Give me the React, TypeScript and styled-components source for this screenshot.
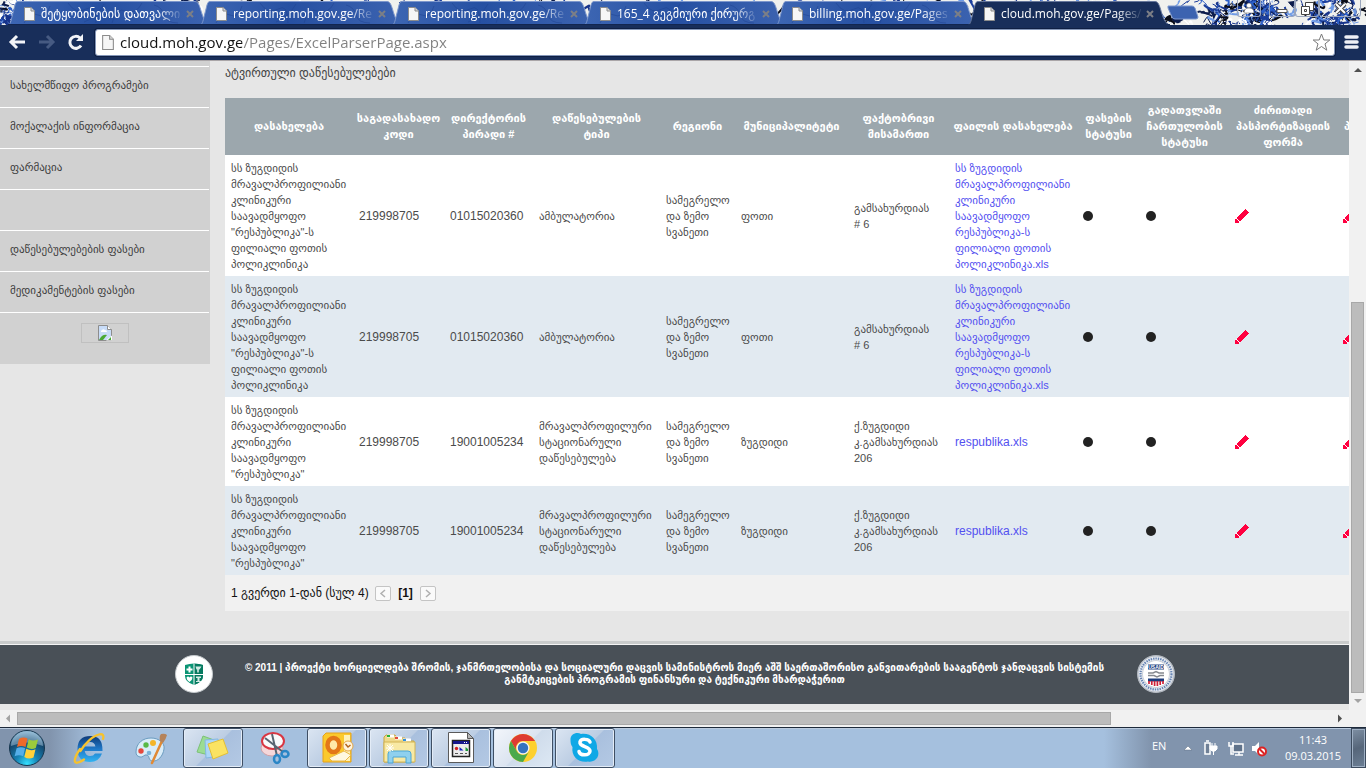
import React from "react";
import styled, { createGlobalStyle, css } from "styled-components";

const georgian = `"Liberation Sans", "DejaVu Sans", sans-serif`;
const arial = `"Liberation Sans", "DejaVu Sans", sans-serif`;
const chrome = `"Open Sans", "DejaVu Sans", sans-serif`;

const GlobalStyle = createGlobalStyle`
  * { box-sizing: border-box; }
  body { margin: 0; background: #e6e6e6; overflow: hidden; font-family: ${arial}; }
  button { border: 0; padding: 0; margin: 0; background: none; font: inherit; color: inherit; }
  a { text-decoration: none; color: inherit; }
  svg { display: block; }
`;

const Screen = styled.div`
  display: flex;
  flex-direction: column;
  height: 100vh;
  overflow: hidden;
`;

/* ---------- browser frame ---------- */

const TabStrip = styled.header`
  position: relative;
  display: flex;
  flex: none;
  height: 25px;
  padding-left: 8px;
  background: #f0f1ee;
  overflow: hidden;
`;

const ThemeArt = styled.svg`
  position: absolute;
  inset: 0;
  width: 100%;
  height: 25px;
`;

const TabRow = styled.div`
  position: relative;
  display: flex;
`;

const TabButton = styled.button<{ $active?: boolean }>`
  position: relative;
  display: flex;
  align-items: center;
  width: 192px;
  height: 25px;
  padding: 3px 0 0 16px;
  color: #fff;
  font-family: ${chrome};
  font-size: 12px;
  z-index: ${(p) => (p.$active ? 2 : 1)};
`;

const TabShape = styled.svg`
  position: absolute;
  left: 0;
  top: 0;
`;

const TabTitle = styled.span`
  position: relative;
  flex: none;
  width: 140px;
  margin-left: 6px;
  line-height: 20px;
  text-align: left;
  white-space: nowrap;
  mask-image: linear-gradient(to right, #000 115px, rgba(0, 0, 0, 0.1) 140px);
`;

const TabIcon = styled.svg`
  position: relative;
  flex: none;
`;

const NewTab = styled.button`
  position: relative;
  margin-left: 7px;
  height: 25px;
`;

const WindowButtons = styled.div`
  position: relative;
  display: flex;
  margin-left: auto;
  padding-right: 5px;
`;

const WindowButton = styled.button<{ $w: number; $apart?: boolean }>`
  width: ${(p) => p.$w}px;
  height: 17px;
  margin-right: ${(p) => (p.$apart ? 8 : 0)}px;
  border: 1px solid #9aa6bd;
  border-top: 0;
  border-radius: 0 0 3px 3px;
  display: flex;
  align-items: center;
  justify-content: center;
`;

const Toolbar = styled.nav`
  display: flex;
  flex: none;
  align-items: center;
  height: 36px;
  padding: 0 7px 1px 8px;
  background: #182e5a;
  border-bottom: 1px solid #aaa6a8;
`;

const ToolButton = styled.button`
  width: 20px;
  height: 20px;
  margin-right: 9px;
`;

const Omnibox = styled.label`
  display: flex;
  flex: 1;
  align-items: center;
  height: 27px;
  margin-right: 8px;
  padding: 0 3px 0 6px;
  background: #fff;
  border: 1px solid #8496b8;
  border-radius: 3px;
  box-shadow: 0 0 0 1px #0e1f44;
`;

const UrlInput = styled.input`
  flex: 1;
  min-width: 0;
  height: 24px;
  margin-left: 6px;
  padding: 0;
  border: 0;
  outline: 0;
  font-family: ${chrome};
  font-size: 15px;
  color: #808080;
  -webkit-text-fill-color: transparent;
  background: linear-gradient(to right, #111 122px, #808080 122px);
  -webkit-background-clip: text;
  background-clip: text;
`;

/* ---------- viewport and scroll bars ---------- */

const Viewport = styled.div`
  display: flex;
  flex: 1;
  min-height: 0;
`;

const Page = styled.div`
  display: flex;
  flex-direction: column;
  flex: 1;
  min-width: 0;
  overflow: hidden;
  background: #e6e6e6;
`;

const VScroll = styled.div`
  display: flex;
  flex-direction: column;
  align-items: center;
  width: 17px;
  background: #f1f1f1;
`;

const HScroll = styled.div`
  display: flex;
  flex: none;
  align-items: center;
  height: 17px;
  padding-right: 17px;
  background: #f1f1f1;
`;

const Arrow = styled.svg`
  flex: none;
  width: 17px;
  height: 17px;
`;

const Gap = styled.div<{ $grow: number }>`
  flex: ${(p) => p.$grow} 1 0;
`;

const VThumb = styled.div`
  flex: 391 1 0;
  width: 13px;
  background: #bcbcbc;
  border: 1px solid #a8a8a8;
`;

const HThumb = styled.div`
  flex: 1094 1 0;
  height: 13px;
  background: #bcbcbc;
  border: 1px solid #a8a8a8;
`;

/* ---------- page content ---------- */

const Body = styled.div`
  display: flex;
  flex: none;
  align-items: flex-start;
`;

const Sidebar = styled.aside`
  flex: none;
  width: 210px;
  padding: 5px 1px 0 0;
  background: #d1d1d1;
`;

const SideLink = styled.a`
  display: block;
  height: 41px;
  padding-left: 10px;
  border-top: 1px solid #fff;
  font-family: ${georgian};
  font-size: 11px;
  line-height: 36px;
  color: #3c3c3c;
`;

const SideEnd = styled.div`
  display: flex;
  justify-content: center;
  height: 52px;
  padding-top: 10px;
  border-top: 1px solid #fff;
`;

const Missing = styled.div`
  display: flex;
  align-items: center;
  justify-content: center;
  width: 48px;
  height: 20px;
  border: 1px solid #c0c0c0;
`;

const Main = styled.main`
  flex: 1;
  min-width: 0;
  padding: 4px 0 30px 15px;
`;

const Heading = styled.h1`
  margin: 0 0 17px;
  font-family: ${georgian};
  font-size: 12px;
  font-weight: 400;
  line-height: 16px;
  color: #444;
`;

const Grid = styled.table`
  width: 1220px;
  table-layout: fixed;
  border-collapse: collapse;
`;

const Col = styled.col<{ $w: number }>`
  width: ${(p) => p.$w}px;
`;

const Th = styled.th`
  height: 57px;
  padding: 4px 2px 5px;
  background: #9ca7ad;
  color: #fff;
  font-family: ${georgian};
  font-size: 11px;
  font-weight: 700;
  line-height: 16px;
  white-space: pre-line;
`;

const Row = styled.tr`
  background: #fff;
  &:nth-child(even) { background: #e2eaf1; }
`;

const Td = styled.td<{ $kind?: "number" | "link" }>`
  padding: 5px 0 4px 6px;
  font-family: ${georgian};
  font-size: 11px;
  line-height: 16px;
  color: #4b4b4b;
  vertical-align: middle;
  white-space: pre-line;
  ${(p) => p.$kind === "number" && css`font-family: ${arial}; font-size: 12px;`}
  ${(p) => p.$kind === "link" && css`color: #5350f0;`}
`;

const LatinLink = styled.a`
  font-family: ${arial};
  font-size: 12px;
`;

const Dot = styled.div`
  width: 10px;
  height: 10px;
  border-radius: 50%;
  background: #222;
`;

const Pager = styled.div`
  display: flex;
  align-items: center;
  width: 1220px;
  height: 36px;
  padding-left: 6px;
  background: #f1f1f1;
  font-family: ${arial};
  font-size: 12px;
  color: #111;
`;

const PagerText = styled.span`
  width: 144px;
  font-family: ${georgian};
  white-space: nowrap;
`;

const PageButton = styled.button`
  display: flex;
  align-items: center;
  justify-content: center;
  width: 16px;
  height: 15px;
  border: 1px solid #c4c4c4;
  border-radius: 2px;
  background: #fafafa;
`;

const PageNumber = styled.b`
  width: 29px;
  text-align: center;
`;

const Footer = styled.footer`
  flex: none;
  display: flex;
  justify-content: center;
  height: 63px;
  border-top: 3px solid #c9cbcb;
  box-shadow: inset 0 1px 0 #f4f4f4;
  background: #495057;
`;

const FooterInner = styled.div`
  display: flex;
  align-items: center;
  justify-content: space-between;
  width: 1000px;
`;

const FooterText = styled.p`
  margin: 0;
  text-align: center;
  white-space: nowrap;
  font-family: ${georgian};
  font-size: 10px;
  font-weight: 700;
  line-height: 12px;
  color: #fff;
`;

/* ---------- task bar ---------- */

const Taskbar = styled.div`
  display: flex;
  flex: none;
  height: 41px;
  border-top: 1px solid #1d2a3b;
  box-shadow: inset 0 1px 0 #b9cade;
  background: linear-gradient(to right, #8194ad 0, #8194ad 50px, #a5c0de 95px, #a5c0de calc(100% - 262px), #8194ad calc(100% - 215px), #8194ad 100%);
`;

const StartButton = styled.button`
  display: flex;
  align-items: center;
  width: 59px;
  padding-left: 8px;
`;

const TaskButton = styled.button<{ $open?: boolean; $front?: boolean }>`
  display: flex;
  align-items: center;
  justify-content: center;
  width: 60px;
  height: 40px;
  margin-right: 2px;
  border: 1px solid transparent;
  ${(p) =>
    p.$open &&
    css`
      border-color: #3f4f64;
      border-radius: 3px;
      box-shadow: inset 0 0 0 1px #e3ecf7;
      background: linear-gradient(135deg, #dbe5f2, #bccde3 50%, #a9c0de 52%, #b4c9e4);
    `}
  ${(p) => p.$front && css`background: linear-gradient(135deg, #f3f6fb, #dbe4f0 50%, #cfdceb 52%, #dde8f4);`}
`;

const Tray = styled.div`
  display: flex;
  align-items: center;
  margin-left: auto;
  color: #fff;
  font-family: ${chrome};
  font-size: 11px;
`;

const Lang = styled.button`
  width: 31px;
  height: 24px;
  padding-bottom: 6px;
  text-align: left;
  align-self: center;
`;

const TrayIcon = styled.button<{ $w: number }>`
  width: ${(p) => p.$w}px;
`;

const Clock = styled.time`
  width: 76px;
  text-align: center;
  line-height: 16px;
`;

const ShowDesktop = styled.button`
  width: 15px;
  height: 40px;
  border: 1px solid #3c4b5e;
  box-shadow: inset 0 0 0 1px #9fb0c4;
  background: linear-gradient(160deg, #7e8fa3, #56667a 50%, #6c7f95);
`;

/* ---------- data ---------- */

const tabs = [
  "შეტყობინების დათვალი",
  "reporting.moh.gov.ge/Re",
  "reporting.moh.gov.ge/Re",
  "165_4 გეგმიური ქირურგ",
  "billing.moh.gov.ge/Pages",
  "cloud.moh.gov.ge/Pages/",
];

const sideLinks = [
  "სახელმწიფო პროგრამები",
  "მოქალაქის ინფორმაცია",
  "ფარმაცია",
  "",
  "დაწესებულებების ფასები",
  "მედიკამენტების ფასები",
];

const columns: [string, number][] = [
  ["დასახელება", 128],
  ["საგადასახადო\nკოდი", 91],
  ["დირექტორის\nპირადი #", 89],
  ["დაწესებულების\nტიპი", 127],
  ["რეგიონი", 75],
  ["მუნიციპალიტეტი", 113],
  ["ფაქტობრივი\nმისამართი", 101],
  ["ფაილის დასახელება", 128],
  ["ფასების\nსტატუსი", 63],
  ["გადათვლაში\nჩართულობის\nსტატუსი", 89],
  ["ძირითადი\nპასპორტიზაციის\nფორმა", 108],
  ["დამატებითი\nპასპორტიზაციის\nფორმა", 108],
];

const branch = {
  name: 'სს ზუგდიდის მრავალპროფილიანი კლინიკური საავადმყოფო "რესპუბლიკა"-ს ფილიალი ფოთის პოლიკლინიკა',
  director: "01015020360",
  type: "ამბულატორია",
  town: "ფოთი",
  address: "გამსახურდიას\n# 6",
  file: "სს ზუგდიდის მრავალპროფილიანი კლინიკური საავადმყოფო რესპუბლიკა-ს ფილიალი ფოთის პოლიკლინიკა.xls",
  latin: false,
};

const hospital = {
  name: 'სს ზუგდიდის მრავალპროფილიანი კლინიკური საავადმყოფო "რესპუბლიკა"',
  director: "19001005234",
  type: "მრავალპროფილური სტაციონარული დაწესებულება",
  town: "ზუგდიდი",
  address: "ქ.ზუგდიდი კ.გამსახურდიას 206",
  file: "respublika.xls",
  latin: true,
};

const rows = [branch, branch, hospital, hospital];

/* ---------- drawings ---------- */

function artwork() {
  let seed = 11;
  const r = () => {
    seed = (seed * 16807) % 2147483647;
    return seed / 2147483647;
  };
  const colours = ["#1c3f9c", "#0c1c4c", "#2c5fc8", "#6f9be6", "#0a0d18", "#ffffff", "#16338a"];
  const stroke = (key: string, x: number, y: number, solidity: number) => {
    const n = (size: number) => (r() * size - size / 2).toFixed(1);
    const d = `M${x.toFixed(1)} ${y.toFixed(1)}q${n(12)} ${n(10)} ${n(16)} ${n(16)}q${n(8)} ${n(8)} ${n(12)} ${n(10)}`;
    const c = colours[Math.floor(r() * colours.length)];
    return <path key={key} d={d} stroke={c} strokeWidth={r() > 0.6 ? 2 : 1} fill={r() < solidity ? c : "none"} />;
  };
  const wide = Array.from({ length: 380 }, (_, i) => stroke(`w${i}`, r() * 1366, r() * 27 - 1, 0.25));
  // Dense flower clusters: centre and half width of each.
  const clusters = [[10, 14], [1240, 34], [1262, 16], [1334, 22]];
  const dense = clusters.flatMap(([cx, half], k) =>
    Array.from({ length: half * 3 }, (_, i) => stroke(`c${k}-${i}`, cx + (r() * 2 - 1) * half, r() * 27 - 1, 0.3))
  );
  return [...wide, ...dense];
}

const art = artwork();

const FileIcon = ({ w = 11, h = 14 }: { w?: number; h?: number }) => (
  <TabIcon width={w} height={h} viewBox="0 0 11 14" aria-hidden="true">
    <path d="M.5.5h6.5l3.500 3.500v9.500h-10z" fill="#f6f6f6" stroke="#8c8c8c" />
    <path d="M7 .5v3.500h3.500" fill="#d8d8d8" stroke="#8c8c8c" />
  </TabIcon>
);

const Tab = ({ title, active }: { title: string; active?: boolean }) => (
  <TabButton $active={active} role="tab" aria-selected={!!active}>
    <TabShape width="203" height="25" aria-hidden="true">
      <defs>
        <linearGradient id="tabFill" x1="0" x2="1" y1="0" y2="0">
          <stop offset="0" stopColor="#3d66b3" />
          <stop offset=".45" stopColor="#2650a2" />
          <stop offset="1" stopColor="#3c63b0" />
        </linearGradient>
      </defs>
      <path
        d="M0 25C3 24 3 20 5 13S7 1.500 10 1.500H187C191 1.500 192 8 194 14S198 24 202 25Z"
        fill={active ? "#182e5a" : "url(#tabFill)"}
        stroke={active ? "#66779b" : "#7d97cc"}
      />
      {!active && (
        <g stroke="#1d4190" fill="none" opacity=".5">
          <path d="M16 23q6-12 14-8t12-9M60 3q8 12 18 6t10 14M104 23q4-16 14-12t16-8M146 5q8 2 10 10t14 8M76 22q12-4 20-18" />
        </g>
      )}
      <path d="M0 24.500h202" stroke={active ? "#182e5a" : "#122650"} />
    </TabShape>
    <FileIcon />
    <TabTitle>{title}</TabTitle>
    <TabIcon width="20" height="9" viewBox="0 0 20 9" aria-hidden="true">
      <path d="M6 1l6 6M12 1l-6 6" stroke="#7c7f86" strokeWidth="2" />
    </TabIcon>
  </TabButton>
);

const Pencil = () => (
  <svg width="14" height="14" viewBox="0 0 14 14" shapeRendering="crispEdges" aria-hidden="true">
    <path d="M10.500 0L14 3.500 5 12 4 13.500H0V10L2 8z" fill="#ff0040" />
    <path d="M1 9h1v1H1zM2 10h1v1H2zM3 11h1v1H3zM4 12h1v1H4z" fill="#fff" />
  </svg>
);

const StarIcon = () => (
  <svg width="19" height="19" viewBox="0 0 19 19" aria-hidden="true">
    <path d="M9.500 1l2.300 6h6l-4.800 3.900 1.800 6.300-5.300-3.700-5.300 3.700L6 10.900 1.200 7h6z" fill="#fff" stroke="#7a7a7a" strokeLinejoin="round" />
  </svg>
);

const MinistryLogo = () => (
  <svg width="38" height="38" viewBox="0 0 38 38" role="img" aria-label="Ministry">
    <circle cx="19" cy="19" r="18.500" fill="#fff" stroke="#c4c9cc" />
    <path d="M10 10q9-3 18 0v11q0 6-9 9-9-3-9-9z" fill="#0a9474" />
    <path d="M19 8.700q5 0 9 1.300v11q0 6-9 9z" fill="#067a60" />
    <path d="M19 8.500v22M9.500 19.500h19" stroke="#fff" />
    <path d="M14.500 11.500v6M11.500 14.500h6" stroke="#fff" strokeWidth="2" />
    <path d="M11.500 22.500q1.500-2 3 0 1.500-2 3 0 0 2.500-3 4.500-3-2-3-4.500z" fill="#fff" />
    <path d="M20.500 11.500h6l-2 3h-.7v3h-1.600v-3h-.7zM21 21.500h5v1.500h-1.500v3h1.500v1h-5v-1h1.500v-3H21z" fill="#d5ece6" />
  </svg>
);

const UsaidLogo = () => (
  <svg width="38" height="38" viewBox="0 0 38 38" role="img" aria-label="USAID">
    <circle cx="19" cy="19" r="18.500" fill="#c3c9d2" stroke="#b4bac2" />
    <circle cx="19" cy="19" r="15.500" fill="none" stroke="#e9ecf1" strokeWidth="3.500" />
    <circle cx="19" cy="19" r="15.500" fill="none" stroke="#6583b3" strokeWidth="2.200" strokeDasharray="1.400 1" />
    <circle cx="19" cy="19" r="13" fill="#fff" />
    <path d="M11 9.500h16v5H11z" fill="#1d3c7c" />
    <text x="19" y="14" textAnchor="middle" fontFamily="Liberation Sans" fontWeight="700" fontSize="5" fill="#fff">USAID</text>
    <path d="M11 18h5l3-1.500 3 1.500h5M11 20.500h6l3 1.500 3-1.500h4" stroke="#85898f" strokeWidth="1.500" fill="none" />
    <path d="M11 23.500h16v3H11z" fill="#1d3c7c" />
    <path d="M12 26v3M14.800 26v4M17.600 26v5M20.400 26v5M23.200 26v4M26 26v3" stroke="#cf2239" strokeWidth="1.700" />
  </svg>
);

const StartOrb = () => (
  <svg width="38" height="38" viewBox="0 0 38 38" aria-hidden="true">
    <defs>
      <radialGradient id="orb" cx=".5" cy=".95" r=".9">
        <stop offset="0" stopColor="#35e0ff" />
        <stop offset=".35" stopColor="#1583b5" />
        <stop offset=".75" stopColor="#14466c" />
        <stop offset="1" stopColor="#6f9fc0" />
      </radialGradient>
    </defs>
    <circle cx="19" cy="19" r="17.500" fill="url(#orb)" stroke="#16364e" />
    <path d="M3 17a16 15 0 0 1 32 0q-16-7-32 0z" fill="#bcd9ea" opacity=".45" />
    <path d="M11 10q4-2.500 8.500-.5l-2 8.500q-4-2-8.500 0z" fill="#ee6a2a" />
    <path d="M20.700 10.200q4 2.500 9.300.3l-2.200 8.500q-4.500 2-9-.5z" fill="#9ccb3c" />
    <path d="M8.600 19.300q4.400-2 8.500 0l-2 8q-4-2-8.500 0z" fill="#55aee8" />
    <path d="M18.300 19.800q4.500 2.500 9.200.5l-2 8.300q-5 2-9.200-.7z" fill="#ffd13a" />
  </svg>
);

const IeIcon = () => (
  <svg width="34" height="34" viewBox="0 0 34 34" aria-hidden="true">
    <defs>
      <linearGradient id="ie" x1="0" x2="0" y1="0" y2="1">
        <stop offset="0" stopColor="#0e3a78" /><stop offset=".5" stopColor="#1f78c8" /><stop offset="1" stopColor="#31b4f2" />
      </linearGradient>
    </defs>
    <path d="M30.500 20H12.700q.8 5 5.500 5 3.300 0 4.800-2.500h7q-3 8.500-12 8.500-12.500 0-12.500-13T18.500 5Q31 5 30.500 20zM12.800 15.500h10.600q-.7-4.500-5.200-4.500-4.600 0-5.400 4.500z" fill="url(#ie)" />
    <path d="M8.500 20C13 12 21 5 27 3.500c4-1 5 1 4 4.500M8 18C2 27 1 33 6 31.500c2-.5 4-1.500 6-3" fill="none" stroke="#f6c22e" strokeWidth="2.300" strokeLinecap="round" />
  </svg>
);

const PaintIcon = () => (
  <svg width="34" height="34" viewBox="0 0 34 34" aria-hidden="true">
    <path d="M2 21C2 12 9 7 17 7s14 5 13 11c-1 7-6 13-12 12-4-1-2-5-5-6s-4 3-7 2-4-2-4-5z" fill="#d9ecf8" stroke="#6b9cc0" />
    <circle cx="7" cy="20" r="2.700" fill="#e6483c" /><circle cx="12" cy="14" r="2.700" fill="#58b947" />
    <circle cx="19" cy="12" r="3" fill="#f4b528" /><circle cx="15" cy="22" r="2.300" fill="#7cb3d8" />
    <path d="M18 32L28 10" stroke="#e08a35" strokeWidth="2.500" strokeLinecap="round" />
    <path d="M26 10q-1-5 1-7 4-1 6 1-1 4-4 8z" fill="#b5835a" />
  </svg>
);

const NotesIcon = () => (
  <svg width="34" height="34" viewBox="0 0 34 34" aria-hidden="true">
    <path d="M7 5l11 4-5 15-12-3z" fill="#9bdc93" stroke="#7cc276" />
    <path d="M9 9l13-1 2 17-14 2z" fill="#acd6f7" stroke="#84b8e2" />
    <path d="M12 13l15-5 5 14-15 6z" fill="#fbe362" stroke="#e3bf36" />
  </svg>
);

const SnipIcon = () => (
  <svg width="34" height="34" viewBox="0 0 34 34" aria-hidden="true">
    <ellipse cx="14" cy="17" rx="11" ry="8" fill="#f5d7da" stroke="#cf9fa6" />
    <ellipse cx="15" cy="10" rx="11" ry="8" fill="#f9fafc" stroke="#d93642" strokeWidth="2" />
    <path d="M7 7l18 14M14 3l5 22" stroke="#596572" strokeWidth="2" />
    <ellipse cx="27" cy="23" rx="3.500" ry="3" fill="none" stroke="#2a86c6" strokeWidth="2.500" />
    <ellipse cx="19" cy="28" rx="3" ry="4" fill="none" stroke="#2a86c6" strokeWidth="2.500" />
  </svg>
);

const OutlookIcon = () => (
  <svg width="34" height="34" viewBox="0 0 34 34" aria-hidden="true">
    <path d="M6 2h25v29H3V5z" fill="#fbc92c" stroke="#e6a21a" />
    <path d="M24 4h6v26h-6z" fill="#fff1b5" />
    <ellipse cx="13.500" cy="14" rx="6" ry="7" fill="#ffe9a8" stroke="#e37718" strokeWidth="4.500" />
    <path d="M9 27l15-7 7 4-6 6H12z" fill="#fff8e0" stroke="#e9b84a" />
    <circle cx="28" cy="15" r="5" fill="#fff5dd" stroke="#e3a64a" />
    <path d="M25.500 13l2.500 3 2.500-2" fill="none" stroke="#b4651c" strokeWidth="1.500" />
  </svg>
);

const ExplorerIcon = () => (
  <svg width="34" height="34" viewBox="0 0 34 34" aria-hidden="true">
    <path d="M2 6l2-2h9l2 3h8l2 3h7v21H2z" fill="#efd98a" stroke="#c6a544" />
    <path d="M5 5h7M13 7h7M21 9h8" stroke="#fff" strokeWidth="3" />
    <path d="M5 5h3" stroke="#26b33a" strokeWidth="2" /><path d="M13 7h3" stroke="#e04b3c" strokeWidth="2" /><path d="M21 9h3" stroke="#2f8fe0" strokeWidth="2" />
    <path d="M2 11h31v20H2z" fill="#f8e9a4" stroke="#d2b455" />
    <path d="M6 32V23q0-3 3-3h17q3 0 3 3v9h-5v-6H11v6z" fill="#8fd0ee" stroke="#4ca6d4" />
    <path d="M8 13v8M4 17h8M5 14l6 6M11 14l-6 6" stroke="#fff" />
  </svg>
);

const ProgramIcon = () => (
  <svg width="34" height="34" viewBox="0 0 34 34" aria-hidden="true">
    <path d="M4.500 1.500h19l6 6v24h-25z" fill="#fff" stroke="#5a5a5a" />
    <path d="M23.500 1.500v6h6z" fill="#b6b6b6" stroke="#5a5a5a" />
    <path d="M8.500 9.500h17v16h-17z" fill="#ececec" stroke="#222" strokeWidth="1.500" />
    <path d="M9 10h16v3H9z" fill="#16168c" />
    <path d="M20 11.500h1M22 11.500h1" stroke="#fff" />
    <circle cx="12.500" cy="17.500" r="1.700" fill="#d42020" /><path d="M15.500 16l4 3.500h-4z" fill="#1722c4" /><path d="M21.500 16v4h2.500v-2z" fill="#1d9a39" />
    <path d="M11 22.500h3M16 22.500h3M21 22.500h2" stroke="#555" />
  </svg>
);

const ChromeIcon = () => (
  <svg width="34" height="34" viewBox="0 0 34 34" aria-hidden="true">
    <circle cx="17" cy="17" r="14" fill="#fdd02f" />
    <path d="M4.900 10A14 14 0 0 1 29.100 10H17a7 7 0 0 0-6.100 10.500z" fill="#de3b32" />
    <path d="M4.900 10A14 14 0 0 0 17 31l6-10.500a7 7 0 0 1-12.100 0z" fill="#4aa94c" />
    <circle cx="17" cy="17" r="6.500" fill="#f4f4f4" /><circle cx="17" cy="17" r="5.200" fill="#3573c0" />
  </svg>
);

const SkypeIcon = () => (
  <svg width="34" height="34" viewBox="0 0 34 34" aria-hidden="true">
    <path d="M2.500 9C2 3 9 .5 13 3c9-1.500 17 5 16 15 4 6-1 14-9 12.500C11 32 3 26 4.500 16 3 14 2.500 12 2.500 9z" fill="#0fa8e6" />
    <path d="M22 11c-1-3-9-4-10 0-1 5 10 4 10 9 0 5-10 5-11 .5" fill="none" stroke="#fff" strokeWidth="3.500" strokeLinecap="round" />
  </svg>
);

const tasks: { name: string; icon: React.ReactNode; open?: boolean; front?: boolean }[] = [
  { name: "Internet Explorer", icon: <IeIcon /> },
  { name: "Paint", icon: <PaintIcon /> },
  { name: "Sticky Notes", icon: <NotesIcon />, open: true },
  { name: "Snipping Tool", icon: <SnipIcon /> },
  { name: "Outlook", icon: <OutlookIcon />, open: true },
  { name: "Explorer", icon: <ExplorerIcon />, open: true },
  { name: "Program", icon: <ProgramIcon />, open: true },
  { name: "Chrome", icon: <ChromeIcon />, open: true, front: true },
  { name: "Skype", icon: <SkypeIcon />, open: true },
];

export default function App() {
  return (
    <Screen>
      <GlobalStyle />
      <TabStrip>
        <ThemeArt aria-hidden="true">{art}</ThemeArt>
        <TabRow role="tablist">
          {tabs.map((t, i) => (
            <Tab key={i} title={t} active={i === 5} />
          ))}
        </TabRow>
        <NewTab aria-label="New tab">
          <svg width="32" height="15" viewBox="0 0 32 15">
            <path d="M1 1h24q2 0 3 2l3 9q0 2-2 2H8q-2 0-3-2L1 3z" fill="#3c63b0" stroke="#7d97cc" />
          </svg>
        </NewTab>
        <WindowButtons>
          <WindowButton $w={24} $apart aria-label="User">
            <svg width="12" height="12"><circle cx="6" cy="3.500" r="2.500" fill="#fff" stroke="#555" strokeWidth=".5" /><path d="M1 11q0-5 5-5t5 5z" fill="#fff" stroke="#555" strokeWidth=".5" /></svg>
          </WindowButton>
          <WindowButton $w={26} aria-label="Minimize">
            <svg width="12" height="12"><path d="M1 7.500h10v3H1z" fill="#fff" stroke="#555" /></svg>
          </WindowButton>
          <WindowButton $w={24} aria-label="Restore">
            <svg width="13" height="13"><path d="M4.500.5h8v8h-8z" fill="#fff" stroke="#444" /><path d="M.5 4.500h8v8h-8z" fill="#fff" stroke="#444" /><path d="M3.500 7.500h2v2h-2z" fill="none" stroke="#444" /></svg>
          </WindowButton>
          <WindowButton $w={42} aria-label="Close">
            <svg width="13" height="13"><path d="M2 2l9 9M11 2l-9 9" stroke="#444" strokeWidth="4" /><path d="M2 2l9 9M11 2l-9 9" stroke="#fff" strokeWidth="2" /></svg>
          </WindowButton>
        </WindowButtons>
      </TabStrip>

      <Toolbar>
        <ToolButton aria-label="Back">
          <svg width="20" height="20"><path d="M17 10H4M9 4l-6 6 6 6" fill="none" stroke="#f2f4f8" strokeWidth="3" /></svg>
        </ToolButton>
        <ToolButton aria-label="Forward">
          <svg width="20" height="20"><path d="M2 10h13M10 4l6 6-6 6" fill="none" stroke="#465a82" strokeWidth="3" /></svg>
        </ToolButton>
        <ToolButton aria-label="Reload">
          <svg width="20" height="20"><path d="M15 13.500A6 6 0 1 1 14 6" fill="none" stroke="#f2f4f8" strokeWidth="3" /><path d="M17 2v7h-7z" fill="#f2f4f8" /></svg>
        </ToolButton>
        <Omnibox>
          <FileIcon w={12} h={15} />
          <UrlInput aria-label="Address" defaultValue="cloud.moh.gov.ge/Pages/ExcelParserPage.aspx" />
          <StarIcon />
        </Omnibox>
        <button aria-label="Menu">
          <svg width="16" height="16"><path d="M3 3h11M3 8h11M3 13h11" stroke="#eef1f6" strokeWidth="3.500" strokeLinecap="round" /></svg>
        </button>
      </Toolbar>

      <Viewport>
        <Page>
          <Body>
            <Sidebar>
              {sideLinks.map((t, i) => (
                <SideLink key={i} href="#">{t}</SideLink>
              ))}
              <SideEnd>
                <Missing>
                  <svg width="14" height="16" role="img" aria-label="Missing picture">
                    <path d="M.5.5h9l4 4v11H.5z" fill="#c8dcf8" stroke="#8d8d8d" />
                    <path d="M9.500.5v4h4" fill="#fff" stroke="#8d8d8d" />
                    <path d="M3 6q2-3 4-1 2 0 2 2H3z" fill="#fff" />
                    <path d="M1 15q3-6 8-5l-4 5z" fill="#4aa934" /><path d="M8 15.500l6-5v5z" fill="#fff" /><path d="M10 15l3-3v3z" fill="#4aa934" />
                  </svg>
                </Missing>
              </SideEnd>
            </Sidebar>
            <Main>
              <Heading>ატვირთული დაწესებულებები</Heading>
              <Grid>
                <colgroup>
                  {columns.map(([name, w]) => <Col key={name} $w={w} />)}
                </colgroup>
                <thead>
                  <tr>{columns.map(([name]) => <Th key={name} scope="col">{name}</Th>)}</tr>
                </thead>
                <tbody>
                  {rows.map((r, i) => (
                    <Row key={i}>
                      <Td>{r.name}</Td>
                      <Td $kind="number">219998705</Td>
                      <Td $kind="number">{r.director}</Td>
                      <Td>{r.type}</Td>
                      <Td>სამეგრელო და ზემო სვანეთი</Td>
                      <Td>{r.town}</Td>
                      <Td>{r.address}</Td>
                      <Td $kind="link">{r.latin ? <LatinLink href="#">{r.file}</LatinLink> : <a href="#">{r.file}</a>}</Td>
                      <Td><Dot /></Td>
                      <Td><Dot /></Td>
                      <Td><a href="#" aria-label="Edit main form"><Pencil /></a></Td>
                      <Td><a href="#" aria-label="Edit additional form"><Pencil /></a></Td>
                    </Row>
                  ))}
                </tbody>
              </Grid>
              <Pager>
                <PagerText>1 გვერდი 1-დან (სულ 4)</PagerText>
                <PageButton aria-label="Previous page">
                  <svg width="8" height="9"><path d="M6 1L2 4.500 6 8" fill="none" stroke="#b0b0b0" strokeWidth="1.500" /></svg>
                </PageButton>
                <PageNumber>[1]</PageNumber>
                <PageButton aria-label="Next page">
                  <svg width="8" height="9"><path d="M2 1l4 3.500L2 8" fill="none" stroke="#b0b0b0" strokeWidth="1.500" /></svg>
                </PageButton>
              </Pager>
            </Main>
          </Body>
          <Footer>
            <FooterInner>
              <MinistryLogo />
              <FooterText>
                © 2011 | პროექტი ხორციელდება შრომის, ჯანმრთელობისა და სოციალური დაცვის სამინისტროს მიერ აშშ საერთაშორისო განვითარების სააგენტოს ჯანდაცვის სისტემის<br />
                განმტკიცების პროგრამის ფინანსური და ტექნიკური მხარდაჭერით
              </FooterText>
              <UsaidLogo />
            </FooterInner>
          </Footer>
        </Page>
        <VScroll>
          <Arrow><path d="M5 11h8l-4-4z" fill="#505050" /></Arrow>
          <Gap $grow={225} />
          <VThumb />
          <Arrow><path d="M5 6h8l-4 4z" fill="#a3a3a3" /></Arrow>
        </VScroll>
      </Viewport>
      <HScroll>
        <Arrow><path d="M10 4.500v8l-4-4z" fill="#a3a3a3" /></Arrow>
        <HThumb />
        <Gap $grow={221} />
        <Arrow><path d="M6 4.500v8l4-4z" fill="#505050" /></Arrow>
      </HScroll>

      <Taskbar>
        <StartButton aria-label="Start"><StartOrb /></StartButton>
        {tasks.map((t) => (
          <TaskButton key={t.name} aria-label={t.name} $open={t.open} $front={t.front}>{t.icon}</TaskButton>
        ))}
        <Tray>
          <Lang>EN</Lang>
          <TrayIcon $w={20} aria-label="Show hidden icons">
            <svg width="10" height="8"><path d="M1 6h8L5 2z" fill="#fff" stroke="#5d6c80" strokeWidth=".5" /></svg>
          </TrayIcon>
          <TrayIcon $w={25} aria-label="Power">
            <svg width="16" height="17"><path d="M2 3h5v11H2z" fill="#6f8096" stroke="#fff" strokeWidth="1.500" /><path d="M3 1h3" stroke="#fff" strokeWidth="1.500" /><path d="M7 6h7v3l-2 2h-3l-2-2zM9 3v3M12 3v3M10.500 11v4" fill="#fff" stroke="#fff" /></svg>
          </TrayIcon>
          <TrayIcon $w={23} aria-label="Network">
            <svg width="17" height="17"><path d="M5 4h10v8H5z" fill="#60738b" stroke="#fff" strokeWidth="1.500" /><path d="M7 15h8M11 12v3" stroke="#fff" strokeWidth="1.500" /><path d="M1 2v4h4V2M3 6v8h3" fill="none" stroke="#fff" strokeWidth="1.500" /></svg>
          </TrayIcon>
          <TrayIcon $w={24} aria-label="Volume">
            <svg width="17" height="17"><path d="M1 6h3l4-4v13l-4-4H1z" fill="#fff" /><circle cx="11" cy="11.500" r="4" fill="#fff" stroke="#dc2323" strokeWidth="2" /><path d="M8.500 9l5 5" stroke="#dc2323" strokeWidth="2" /></svg>
          </TrayIcon>
          <Clock>11:43<br />09.03.2015</Clock>
          <ShowDesktop aria-label="Show desktop" />
        </Tray>
      </Taskbar>
    </Screen>
  );
}
